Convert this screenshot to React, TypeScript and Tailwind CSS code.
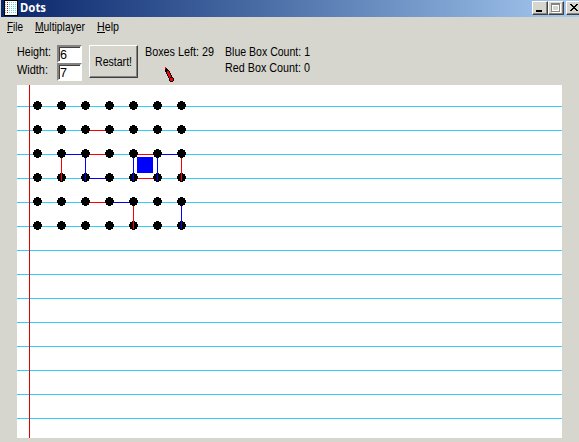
import React from "react";

const BLUE = "#0000ff";
const RED = "#ff0000";
const columns = [0, 1, 2, 3, 4, 5, 6];
const rows = [0, 1, 2, 3, 4, 5];
const ruled = Array.from({ length: 14 }, (_, i) => 21 + i * 24);

const across: [number, number, string][] = [
  [2, 1, RED], [1, 2, BLUE], [2, 2, RED], [4, 2, RED], [5, 2, BLUE],
  [2, 3, BLUE], [4, 3, RED], [2, 4, RED], [3, 4, BLUE],
];
const down: [number, number, string][] = [
  [1, 2, RED], [2, 2, BLUE], [4, 2, BLUE], [5, 2, BLUE], [6, 2, RED],
  [4, 4, RED], [6, 4, BLUE],
];

function Label({ text, width, className = "" }: { text: string; width: number; className?: string }) {
  return (
    <svg width={width} height="16" className={`block shrink-0 overflow-visible ${className}`}>
      <text x="0" y="12" textLength={width} lengthAdjust="spacingAndGlyphs" fill="currentColor">{text}</text>
    </svg>
  );
}

function MenuItem({ text, width, underline }: { text: string; width: number; underline: string }) {
  return (
    <div className="h-4">
      <Label text={text} width={width} />
      <div className={`-mt-[3px] h-px bg-black ${underline}`} />
    </div>
  );
}

function Board() {
  return (
    <svg width="545" height="353" shapeRendering="crispEdges" className="block bg-white">
      {ruled.map((y) => <rect key={y} x="0" y={y} width="545" height="1" fill="#33ccff" />)}
      <rect x="12" y="0" width="1" height="353" fill="#dd0000" />
      {across.map(([c, r, color]) => (
        <rect key={`${c}-${r}`} x={20 + c * 24} y={21 + r * 24} width="24" height="1" fill={color} />
      ))}
      {rows.map((r) => columns.map((c) => (
        <path key={`${c}-${r}`} transform={`translate(${16 + c * 24} ${16 + r * 24})`} d="M3 0h3v1h2v2h1v3h-1v2h-2v1h-3v-1h-2v-2h-1v-3h1v-2h2z" />
      )))}
      {down.map(([c, r, color]) => (
        <rect key={`${c}-${r}`} x={20 + c * 24} y={25 + r * 24} width="1" height="23" fill={color} />
      ))}
      <rect x="120" y="72" width="16" height="16" fill="#0000ff" />
    </svg>
  );
}

// Pencil sprite: R is red, B is black
const pencil = [
  "R........",
  "RB.......",
  "BBB......",
  "BBBB.....",
  "BBRRB....",
  ".BRRB....",
  ".BRRRB...",
  "..BRRB...",
  "..BRRRB..",
  "...BRRB..",
  "...BRBBB.",
  "....BRRRB",
  "....BRRRB",
  "....BRRRB",
  ".....BBB.",
];

function Pencil() {
  return (
    <svg width="9" height="15" shapeRendering="crispEdges" className="ml-5 mt-[7px] block">
      {pencil.map((line, y) => line.split("").map((cell, x) =>
        cell === "." ? null : (
          <rect key={`${x}-${y}`} x={x} y={y} width="1" height="1" fill={cell === "R" ? "#ff0000" : "#000000"} />
        ),
      ))}
    </svg>
  );
}

function CaptionButton({ children, className = "" }: { children: React.ReactNode; className?: string }) {
  return (
    <div className={`h-[14px] w-4 shrink-0 border border-b-[#404040] border-l-white border-r-[#404040] border-t-white bg-[#d6d6ce] shadow-[inset_-1px_-1px_#848484] ${className}`}>
      <svg width="14" height="12" shapeRendering="crispEdges" className="block">{children}</svg>
    </div>
  );
}

function Field({ value }: { value: string }) {
  return (
    <div className="h-[18px] w-[25px] border-2 border-b-white border-l-[#848484] border-r-white border-t-[#848484] bg-white pl-px shadow-[inset_1px_1px_#404040]">
      <Label text={value} width={7} />
    </div>
  );
}

export default function App() {
  return (
    <div className="flex h-[442px] w-[579px] flex-col overflow-hidden bg-[#d6d6ce] font-['Liberation_Sans',sans-serif] text-[12.5px] text-black">
      <header className="ml-px flex h-[17px] shrink-0 bg-linear-to-r from-[#0a246a] to-[#a6caf0]">
        <svg width="16" height="16" shapeRendering="crispEdges" className="ml-[3px] shrink-0">
          <rect width="14" height="16" fill="#000" />
          <rect x="1" y="1" width="12" height="14" fill="#fff" />
          {[2, 4, 6, 8, 10, 12].map((y) => [1, 3, 5, 7, 9, 11].map((x) => (
            <rect key={`${x}-${y}`} x={x} y={y} width="1" height="1" fill={x === 3 ? "#e00000" : "#55dddd"} />
          )))}
        </svg>
        <Label text="Dots" width={26} className="font-['Noto_Sans',sans-serif] font-bold text-white" />
        <div className="flex-1" />
        <div className="mr-[-3px] flex pt-px">
          <CaptionButton><rect x="3" y="8" width="6" height="2" /></CaptionButton>
          <CaptionButton className="mr-[2px]">
            <path d="M3 2h9v9h-9z" fill="#fff" />
            <path d="M2 1h9v9h-9z" fill="#848484" />
            <path d="M3 3h7v6h-7z" fill="#fff" />
            <rect x="4" y="4" width="5" height="4" fill="#d6d6ce" />
          </CaptionButton>
          <CaptionButton><path d="M3 2h2v1h1v1h2v-1h1v-1h2v1h-1v1h-1v1h-1v1h1v1h1v1h1v1h-2v-1h-1v-1h-2v1h-1v1h-2v-1h1v-1h1v-1h1v-1h-1v-1h-1v-1h-1z" /></CaptionButton>
        </div>
      </header>
      <nav className="flex h-[27px] shrink-0 pl-[7px] pt-[2px]">
        <div className="w-7"><MenuItem text="File" width={16} underline="w-[6px]" /></div>
        <div className="w-[62px]"><MenuItem text="Multiplayer" width={50} underline="w-[9px]" /></div>
        <MenuItem text="Help" width={22} underline="w-[8px]" />
      </nav>
      <section className="flex h-[41px] shrink-0 pl-[17px]">
        <div className="flex w-10 flex-col gap-[2px]">
          <Label text="Height:" width={34} />
          <Label text="Width:" width={31} />
        </div>
        <div className="flex w-8 flex-col pt-px"><Field value="6" /><Field value="7" /></div>
        <button className="mt-px h-[33px] w-[49px] border border-b-[#404040] border-l-white border-r-[#404040] border-t-white pl-[5px] shadow-[inset_-1px_-1px_#848484]">
          <Label text="Restart!" width={37} />
        </button>
        <div className="ml-[7px] w-20">
          <Label text="Boxes Left: 29" width={69} />
          <Pencil />
        </div>
        <div>
          <Label text="Blue Box Count: 1" width={85} />
          <Label text="Red Box Count: 0" width={85} />
        </div>
      </section>
      <main className="mx-[17px]"><Board /></main>
    </div>
  );
}
